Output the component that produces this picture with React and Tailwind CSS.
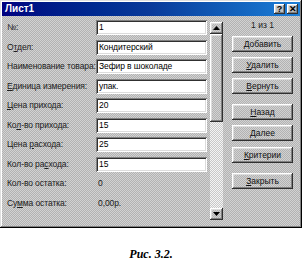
import { Fragment } from 'react';

const dither =
  'bg-[#c0c0c0] bg-[image:repeating-conic-gradient(#b2b2b2_0_25%,#d2d2d2_0_50%)] bg-[length:2px_2px]';
const trough =
  'bg-[#e0e0e0] bg-[image:repeating-conic-gradient(#c8c8c8_0_25%,#f4f4f4_0_50%)] bg-[length:2px_2px]';
const raised =
  'shadow-[inset_-1px_-1px_#303030,inset_1px_1px_#ffffff,inset_-2px_-2px_#808080,inset_2px_2px_#dcdcdc]';
const sunken =
  'shadow-[inset_1px_1px_#808080,inset_-1px_-1px_#ffffff,inset_2px_2px_#303030,inset_-2px_-2px_#dcdcdc]';

const rows = [
  { label: <>№:</>, value: '1' },
  { label: <>О<u>т</u>дел:</>, value: 'Кондитерский' },
  { label: <>Наименование товара:</>, value: 'Зефир в шоколаде' },
  { label: <><u>Е</u>диница измерения:</>, value: 'упак.' },
  { label: <><u>Ц</u>ена прихода:</>, value: '20' },
  { label: <>Ко<u>л</u>-во прихода:</>, value: '15' },
  { label: <>Цена <u>р</u>асхода:</>, value: '25' },
  { label: <>Кол-во ра<u>с</u>хода:</>, value: '15' },
  { label: <>Кол-во остатка:</>, value: '0', plain: true },
  { label: <>Су<u>м</u>ма остатка:</>, value: '0,00р.', plain: true },
];

function Btn({ children, className = '' }) {
  return (
    <div className={`h-[16px] w-[61px] flex items-center justify-center text-[8.5px] text-[#101010] ${dither} ${raised} ${className}`}>
      <span>{children}</span>
    </div>
  );
}

function Arrow({ up }) {
  return (
    <div className={`h-[12px] flex items-center justify-center ${dither} ${raised}`}>
      <svg width="7" height="4" viewBox="0 0 7 4">
        <path d={up ? 'M3.5 0 L7 4 L0 4 Z' : 'M0 0 L7 0 L3.5 4 Z'} fill="#000" />
      </svg>
    </div>
  );
}

export default function App() {
  return (
    <div className="w-[302px] h-[261px] bg-white font-['Liberation_Sans',Arial,sans-serif] overflow-hidden">
      {/* Dialog */}
      <div className={`w-[302px] h-[228px] p-[2px] ${dither} shadow-[inset_-1px_-1px_#000000,inset_1px_1px_#dfdfdf,inset_-2px_-2px_#808080,inset_2px_2px_#ffffff]`}>
        {/* Title bar */}
        <div className="h-[14px] flex items-center justify-between pl-[3px] pr-[2px] bg-gradient-to-r from-[#000080] via-[#0a3a9a] to-[#1e80d8]">
          <span className="text-white font-bold text-[10px] leading-none">Лист1</span>
          <div className="flex gap-[2px]">
            <div className={`w-[11px] h-[10px] flex items-center justify-center text-[9px] font-bold leading-none text-black bg-[#c0c0c0] ${raised}`}>?</div>
            <div className={`w-[11px] h-[10px] flex items-center justify-center text-[9px] font-bold leading-none text-black bg-[#c0c0c0] ${raised}`}>✕</div>
          </div>
        </div>

        {/* Body */}
        <div className="flex">
          {/* Form */}
          <div className="grid grid-cols-[89px_111px] auto-rows-[15px] gap-y-[4.5px] pt-[4px] pl-[5px] text-[8.5px] tracking-[-0.1px]">
            {rows.map((r, i) => (
              <Fragment key={i}>
                <div className="flex items-center text-[#202020] whitespace-nowrap">
                  <span>{r.label}</span>
                </div>
                {r.plain ? (
                  <div className="flex items-center pl-[2px] text-[#202020]">{r.value}</div>
                ) : (
                  <div className={`flex items-center pl-[3px] bg-white text-black whitespace-nowrap overflow-hidden ${sunken}`}>{r.value}</div>
                )}
              </Fragment>
            ))}
          </div>

          {/* Scrollbar */}
          <div className="ml-[3px] mt-[6px] w-[13px] h-[198px] flex flex-col">
            <Arrow up />
            <div className={`h-[88px] ${dither} ${raised}`} />
            <div className={`flex-1 ${trough}`} />
            <Arrow />
          </div>

          {/* Buttons */}
          <div className="ml-[9px] flex flex-col">
            <div className="h-[12px] mt-[3px] flex items-center justify-center text-[8.5px] text-[#202020]">1 из 1</div>
            <Btn className="mt-[5px]"><u>Д</u>обавить</Btn>
            <Btn className="mt-[5px]"><u>У</u>далить</Btn>
            <Btn className="mt-[5px]"><u>В</u>ернуть</Btn>
            <Btn className="mt-[10px]"><u>Н</u>азад</Btn>
            <Btn className="mt-[5px]"><u>Д</u>алее</Btn>
            <Btn className="mt-[6px]"><u>К</u>ритерии</Btn>
            <Btn className="mt-[10px]"><u>З</u>акрыть</Btn>
          </div>
        </div>
      </div>

      {/* Caption */}
      <div className="mt-[17px] text-center font-['Liberation_Serif','Times_New_Roman',serif] font-bold italic text-[12px] text-black">
        Рис. 3.2.
      </div>
    </div>
  );
}
